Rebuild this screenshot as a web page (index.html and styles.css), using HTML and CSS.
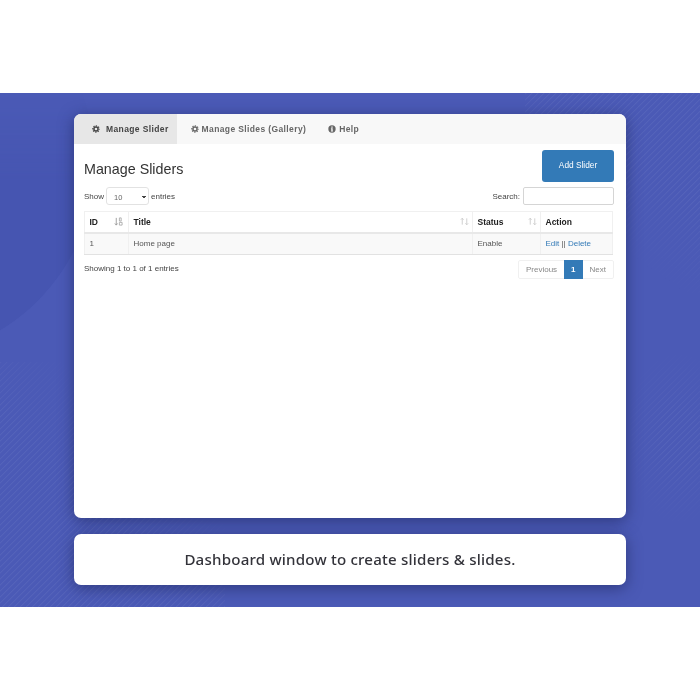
FILE: index.html
```html
<!DOCTYPE html>
<html lang="en">
<head>
<meta charset="utf-8">
<title>Manage Sliders</title>
<link rel="stylesheet" href="styles.css">
</head>
<body>
<svg class="defs" width="0" height="0" aria-hidden="true">
  <defs>
    <symbol id="cog" viewBox="0 0 12 12">
      <circle cx="6" cy="6" r="3.100" fill="none" stroke="currentColor" stroke-width="2.200"/>
      <circle cx="6" cy="6" r="4.800" fill="none" stroke="currentColor" stroke-width="1.800" stroke-dasharray="1.900 1.870" stroke-dashoffset=".95"/>
    </symbol>
    <symbol id="info" viewBox="0 0 12 12">
      <path fill-rule="evenodd" d="M6 .5a5.500 5.500 0 1 1 0 11 5.500 5.500 0 0 1 0-11zM5 2.300v1.800h2V2.300zM4.400 5v1.200H5v2.300h-.6v1.200h3.200V8.500H7V5z" fill="currentColor"/>
    </symbol>
    <symbol id="sort" viewBox="0 0 10 10">
      <path d="M2.500 8.500V1.500M1 3l1.500-1.700L4 3M7.500 1.500v7M6 7l1.500 1.700L9 7" fill="none" stroke="currentColor" stroke-width="1"/>
    </symbol>
    <symbol id="sort-asc" viewBox="0 0 10 10">
      <path d="M2.500 1v8M1 7.200 2.500 9 4 7.200" fill="none" stroke="currentColor" stroke-width="1"/>
      <path d="M6 1h2v3.500H6zM6 6h3v3H6z" fill="none" stroke="currentColor" stroke-width=".8"/>
    </symbol>
  </defs>
</svg>
<main class="hero">
  <div class="wave"></div>
  <div class="stripes stripes-top"></div>
  <div class="stripes stripes-left"></div>
  <div class="stripes stripes-right"></div>
  <section class="card">
    <nav class="tabs">
      <a class="tab tab-active"><svg class="tab-icon"><use href="#cog"/></svg>Manage Slider</a>
      <a class="tab"><svg class="tab-icon"><use href="#cog"/></svg>Manage Slides (Gallery)</a>
      <a class="tab"><svg class="tab-icon"><use href="#info"/></svg>Help</a>
    </nav>
    <div class="panel">
      <header class="panel-head">
        <h1 class="panel-title">Manage Sliders</h1>
        <button class="add-btn">Add Slider</button>
      </header>
      <div class="controls">
        <label class="control">Show
          <select class="length-select"><option>10</option></select>
          entries</label>
        <label class="control">Search:
          <input class="search-input" type="text">
        </label>
      </div>
      <table class="data-table">
        <colgroup>
          <col class="col-id"><col class="col-title"><col class="col-status"><col class="col-action">
        </colgroup>
        <thead>
          <tr>
            <th><span class="th-inner">ID<svg class="sort-icon sort-icon-on"><use href="#sort-asc"/></svg></span></th>
            <th><span class="th-inner">Title<svg class="sort-icon"><use href="#sort"/></svg></span></th>
            <th><span class="th-inner">Status<svg class="sort-icon"><use href="#sort"/></svg></span></th>
            <th>Action</th>
          </tr>
        </thead>
        <tbody>
          <tr>
            <td>1</td>
            <td>Home page</td>
            <td>Enable</td>
            <td><a class="link">Edit</a> || <a class="link">Delete</a></td>
          </tr>
        </tbody>
      </table>
      <div class="table-foot">
        <span class="info-text">Showing 1 to 1 of 1 entries</span>
        <div class="pager">
          <a class="page">Previous</a>
          <a class="page page-current">1</a>
          <a class="page">Next</a>
        </div>
      </div>
    </div>
  </section>
  <section class="caption"><span class="caption-text">Dashboard window to create sliders &amp; slides.</span></section>
</main>
</body>
</html>
```
FILE: styles.css
```css
* { box-sizing: border-box; }
html, body { margin: 0; padding: 0; background: #fff; }
body {
  width: 700px;
  height: 700px;
  padding-top: 93px;
  overflow: hidden;
  font-family: "Liberation Sans", Arial, sans-serif;
  color: #333;
}
.defs { position: absolute; }
.hero {
  position: relative;
  height: 514px;
  padding: 21px 74px 0;
  overflow: hidden;
  display: flex;
  flex-direction: column;
  gap: 16px;
  background: #4b5ab6;
}
.wave {
  position: absolute;
  left: -295px;
  top: -125px;
  width: 390px;
  height: 390px;
  border-radius: 50%;
  background: #4655b1;
  -webkit-mask-image: linear-gradient(transparent 32%, #000 55%);
  mask-image: linear-gradient(transparent 32%, #000 55%);
}
.stripes {
  position: absolute;
  background: repeating-linear-gradient(135deg, rgba(255,255,255,.055) 0, rgba(255,255,255,.055) 1.100px, rgba(255,255,255,0) 1.600px, rgba(255,255,255,0) 4.243px);
}
.stripes-top {
  top: 0; right: 0; width: 175px; height: 200px;
  -webkit-mask-image: linear-gradient(215deg, #000 35%, transparent 68%);
  mask-image: linear-gradient(215deg, #000 35%, transparent 68%);
}
.stripes-left {
  left: 0; bottom: 0; width: 225px; height: 245px;
  -webkit-mask-image: linear-gradient(45deg, #000 42%, transparent 68%);
  mask-image: linear-gradient(45deg, #000 42%, transparent 68%);
}
.stripes-right {
  right: 0; top: 235px; width: 70px; height: 200px;
  -webkit-mask-image: radial-gradient(ellipse 60px 90px at 70% 55%, #000 30%, transparent 100%);
  mask-image: radial-gradient(ellipse 60px 90px at 70% 55%, #000 30%, transparent 100%);
}
.card, .caption {
  position: relative;
  background: #fff;
  border-radius: 7px;
  box-shadow: 0 3px 15px rgba(28,36,90,.6);
}
.card {
  height: 404px;
  overflow: hidden;
}
.tabs, .panel, .caption-text { filter: blur(.3px); }
.tabs {
  display: flex;
  height: 30px;
  background: #f8f8f8;
  font-size: 8.500px;
  font-weight: 700;
  letter-spacing: .38px;
  color: #666;
}
.tab {
  display: flex;
  align-items: center;
  padding: 0 8px 0 14px;
  white-space: nowrap;
}
.tab-active {
  padding: 0 8px 0 18px;
  background: #e7e7e7;
  color: #444;
}
.tab-icon {
  width: 8px;
  height: 8px;
  margin-right: 3px;
}
.tab-active .tab-icon { margin-right: 6px; }
.panel { padding: 6px 12px 0 10px; }
.panel-head {
  display: flex;
  justify-content: space-between;
  align-items: center;
  height: 32px;
}
.panel-title {
  margin: 5px 0 0;
  font-size: 14.300px;
  font-weight: 400;
  color: #333;
}
.add-btn {
  width: 72px;
  height: 32px;
  padding: 0 0 3px;
  border: 0;
  border-radius: 3px;
  background: #337ab7;
  color: #fff;
  font: 400 8.300px "Liberation Sans", Arial, sans-serif;
}
.controls {
  display: flex;
  justify-content: space-between;
  align-items: center;
  margin-top: 5px;
  height: 18px;
}
.control {
  display: flex;
  align-items: center;
  gap: 2px;
  font-size: 8px;
  color: #444;
}
.length-select {
  appearance: none;
  -webkit-appearance: none;
  width: 43px;
  height: 18px;
  padding: 2px 0 0 7px;
  border: 1px solid #e2e2e2;
  border-radius: 3px;
  color: #666;
  font: 7.500px "Liberation Sans", Arial, sans-serif;
  background:
    linear-gradient(45deg, transparent 50%, #444 50%) 35px 8px / 2px 2px no-repeat,
    linear-gradient(-45deg, transparent 50%, #444 50%) 37px 8px / 2px 2px no-repeat,
    #fff;
}
.search-input {
  width: 91px;
  height: 18px;
  margin-left: 1px;
  border: 1px solid #d5d5d5;
  border-radius: 2px;
  background: #fff;
}
.data-table {
  width: 529px;
  margin-top: 6px;
  table-layout: fixed;
  border-collapse: collapse;
  font-size: 8px;
}
.col-id { width: 44px; }
.col-status { width: 68px; }
.col-action { width: 72px; }
.data-table th, .data-table td {
  border: 1px solid #f0f0f0;
  padding: 0 4px 0 4.500px;
  text-align: left;
}
.data-table th {
  height: 21px;
  border-bottom: 2px solid #e8e8e8;
  font-weight: 700;
  font-size: 8.500px;
  color: #222;
}
.data-table td {
  height: 22px;
  background: #f9f9f9;
  color: #555;
}
.data-table tbody td { border-bottom-color: #e2e2e2; }
.th-inner {
  display: flex;
  justify-content: space-between;
  align-items: center;
}
.sort-icon {
  width: 9px;
  height: 9px;
  margin-right: -1px;
  color: #ccc;
}
.sort-icon-on { margin-right: 1px; color: #999; }
.link { color: #337ab7; }
.table-foot {
  display: flex;
  justify-content: space-between;
  align-items: flex-start;
  margin-top: 5px;
  font-size: 8px;
}
.info-text {
  margin-top: 4px;
  color: #444;
}
.pager {
  display: flex;
  height: 19px;
  border: 1px solid #f0f0f0;
  border-radius: 2px;
  color: #888;
}
.page {
  display: flex;
  align-items: center;
  padding: 0 7px;
}
.page-current {
  margin: -1px 0;
  background: #337ab7;
  color: #fff;
  font-weight: 700;
}
.caption {
  height: 51px;
  display: flex;
  align-items: center;
  justify-content: center;
  padding-bottom: 2px;
  font-family: "Noto Sans", sans-serif;
  font-size: 15.100px;
  font-weight: 500;
  letter-spacing: .2px;
  color: #33333a;
}
```
